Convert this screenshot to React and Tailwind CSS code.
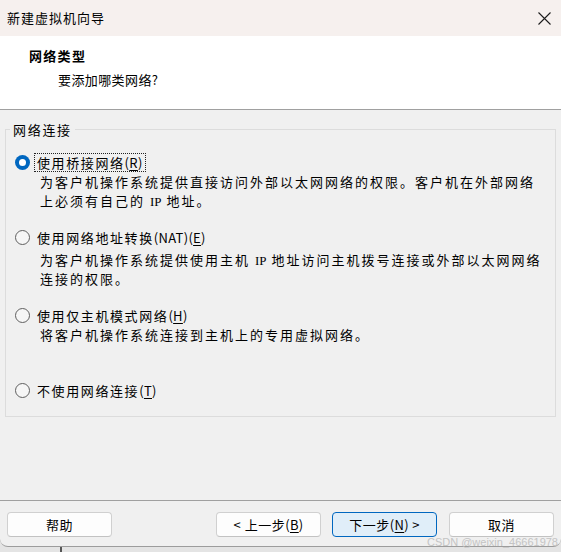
import React from "react";

const U = ({ children }) => (
  <span className="underline underline-offset-[2px] decoration-[1px]">{children}</span>
);

const L = ({ children }) => <span className="tracking-[0.3px]">{children}</span>;

function Radio({ checked }) {
  if (checked) {
    return (
      <span className="w-[15px] h-[15px] rounded-full bg-[#0067c0] flex items-center justify-center shrink-0">
        <span className="block w-[7px] h-[7px] rounded-full bg-white" />
      </span>
    );
  }
  return (
    <span className="block w-[15px] h-[15px] rounded-full border border-[#5f5f5f] bg-[#f6f6f6] shrink-0" />
  );
}

function RadioRow({ checked, children, className = "" }) {
  return (
    <div className={"flex items-center h-[19px] " + className}>
      <span className="block ml-[9px]">
        <Radio checked={checked} />
      </span>
      <span
        className={
          "block ml-[4px] px-[2px] h-[19px] leading-[17px] tracking-[1.6px] whitespace-nowrap border " +
          (checked ? "border-dotted border-[#222]" : "border-transparent")
        }
      >
        {children}
      </span>
    </div>
  );
}

function Desc({ lines, className = "" }) {
  return (
    <div className={"pl-[34px] tracking-[2px] " + className}>
      {lines.map((l, i) => (
        <div key={i} className="h-[19px] leading-[19px] whitespace-nowrap">
          {l}
        </div>
      ))}
    </div>
  );
}

function Btn({ children, primary }) {
  return (
    <button
      className={
        "w-[105px] h-[25px] rounded-[4px] border text-[13px] leading-[23px] text-black flex items-center justify-center tracking-[0.5px] " +
        (primary
          ? "bg-[#e0eef9] border-[#0067c0]"
          : "bg-[#fdfdfd] border-[#d0d0d0] border-b-[#c2c2c2]")
      }
    >
      {children}
    </button>
  );
}

export default function App() {
  const IP = <span className="font-['Liberation_Serif',serif] tracking-[0px]">IP</span>;
  return (
    <div className="w-[561px] h-[552px] relative overflow-hidden bg-[#e4e4e4] font-['Noto_Sans_CJK_SC','Noto_Sans',sans-serif] text-[13px] text-black">
      <div className="flex flex-col h-[547px] bg-[#f0f0f0] rounded-b-[8px] border-b border-[#9c9c9c]">
        {/* Title bar */}
        <div className="h-[36px] shrink-0 bg-[#f6f0ee] flex items-center justify-between pl-[7px] pr-[10px]">
          <span className="tracking-[1px] leading-[18px]">新建虚拟机向导</span>
          <svg width="13" height="13" viewBox="0 0 13 13">
            <path d="M0.5 0.5 L12.5 12.5 M12.5 0.5 L0.5 12.5" stroke="#1c1c1c" strokeWidth="1.1" />
          </svg>
        </div>
        {/* Header */}
        <div className="h-[74px] shrink-0 bg-white border-b border-[#a0a0a0] pt-[10px]">
          <div className="pl-[29px] font-bold tracking-[1.3px] h-[19px] leading-[19px]">网络类型</div>
          <div className="pl-[58px] mt-[5px] tracking-[0.4px] h-[19px] leading-[19px]">要添加哪类网络?</div>
        </div>
        {/* Body */}
        <div className="flex-1 px-[5px] pt-[10px]">
          <fieldset className="border border-[#dcdcdc] h-[297px] m-0 p-0">
            <legend className="ml-[4px] px-[3px] h-[19px] leading-[19px] tracking-[1.7px]">网络连接</legend>
            <RadioRow checked className="mt-[14px]">
              使用桥接网络<L>(<U>R</U>)</L>
            </RadioRow>
            <Desc
              lines={[
                "为客户机操作系统提供直接访问外部以太网网络的权限。客户机在外部网络",
                <>上必须有自己的 {IP} 地址。</>,
              ]}
            />
            <RadioRow className="mt-[18px]">
              使用网络地址转换<L>(NAT)(<U>E</U>)</L>
            </RadioRow>
            <Desc
              className="mt-[3px]"
              lines={[
                <>为客户机操作系统提供使用主机 {IP} 地址访问主机拨号连接或外部以太网网络</>,
                "连接的权限。",
              ]}
            />
            <RadioRow className="mt-[18px]">
              使用仅主机模式网络<L>(<U>H</U>)</L>
            </RadioRow>
            <Desc lines={["将客户机操作系统连接到主机上的专用虚拟网络。"]} />
            <RadioRow className="mt-[37px]">
              不使用网络连接<L>(<U>T</U>)</L>
            </RadioRow>
          </fieldset>
        </div>
        {/* Footer */}
        <div className="h-[46px] shrink-0 border-t border-[#a0a0a0] pt-[11px] px-[7px] flex items-start">
          <Btn>帮助</Btn>
          <div className="flex-1" />
          <Btn>&lt; 上一步<L>(<U>B</U>)</L></Btn>
          <div className="w-[11px]" />
          <Btn primary>下一步<L>(<U>N</U>) &gt;</L></Btn>
          <div className="w-[12px]" />
          <Btn>取消</Btn>
        </div>
      </div>
      <div className="absolute left-[60px] bottom-0 w-[2px] h-[5px] bg-[#555]" />
      <span className="absolute right-[3px] bottom-[4px] text-[11px] leading-[12px] font-['Liberation_Sans',sans-serif] text-[#c4c4c4]">
        CSDN @weixin_46661978
      </span>
    </div>
  );
}
